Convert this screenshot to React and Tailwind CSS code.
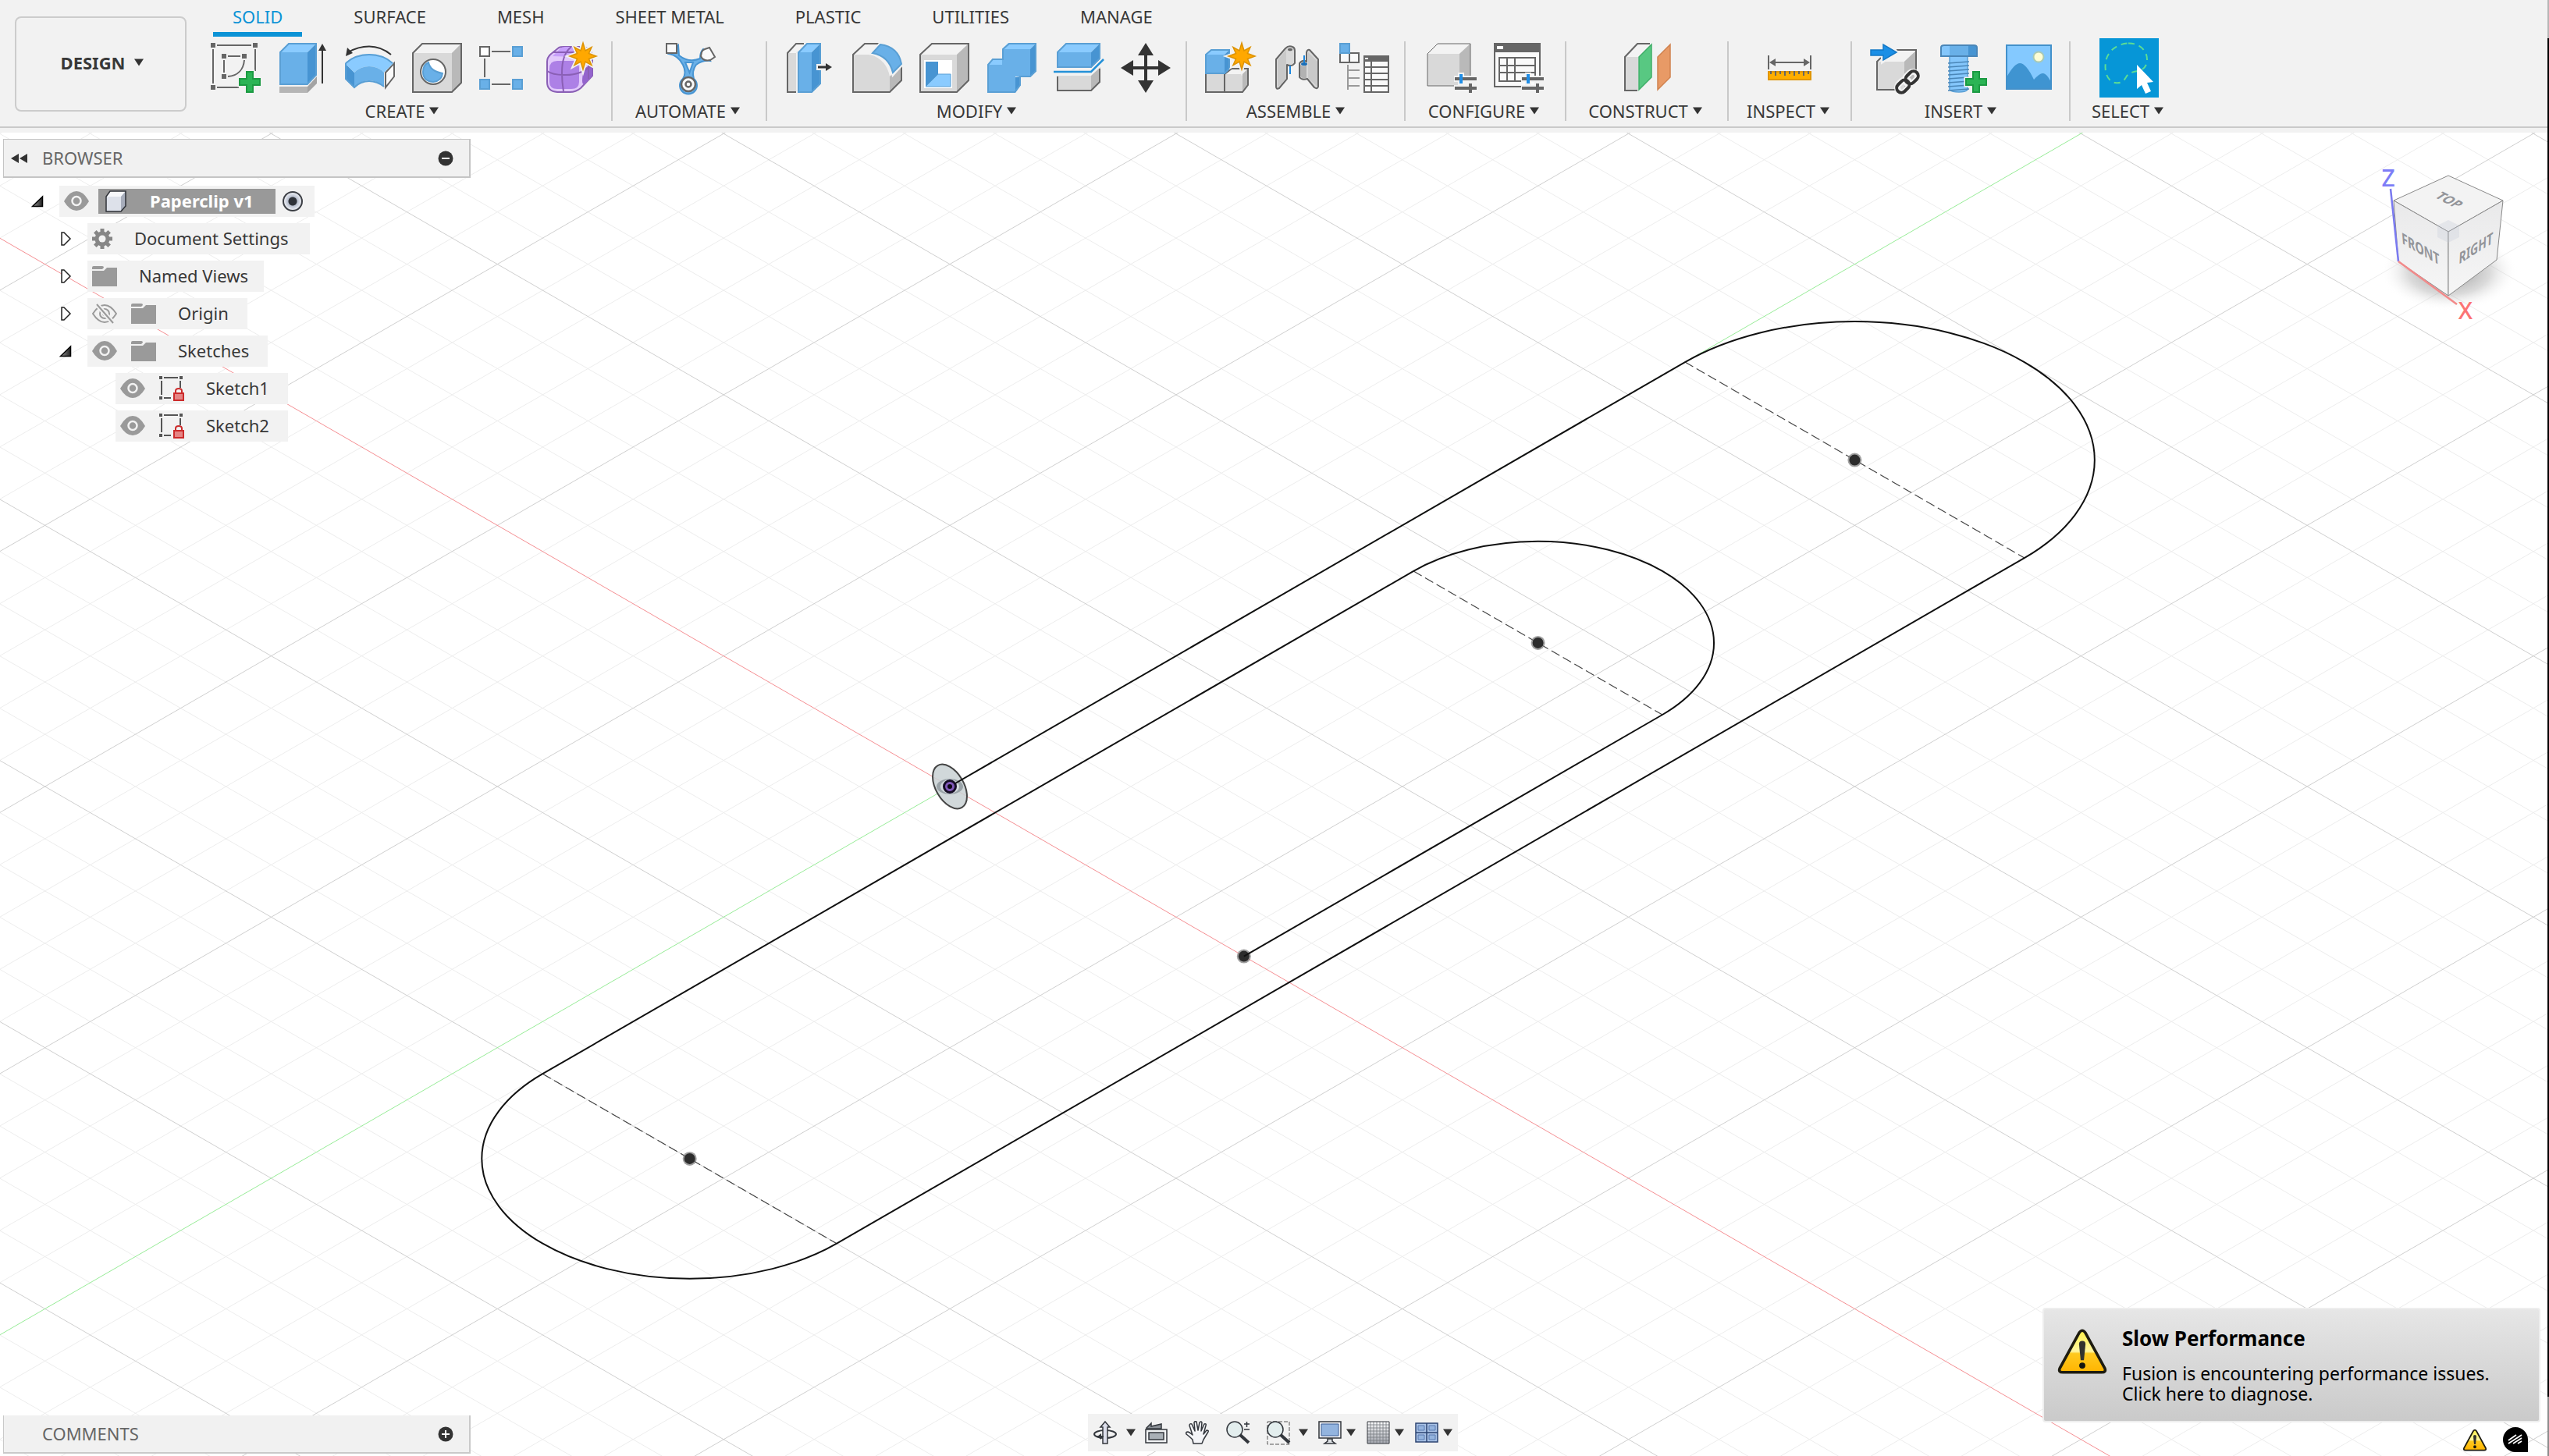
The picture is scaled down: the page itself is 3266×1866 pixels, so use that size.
import React from "react";

/* ---------- shared bits ---------- */

const BLUE = "#69b0e8";
const BLUE_TOP = "#8acbff";
const BLUE_SIDE = "#4794d2";
const BLUE_EDGE = "#5a9fd4";
const GRAY = "#d9d9d9";
const GRAY_TOP = "#f3f3f3";
const GRAY_SIDE = "#b9b9b9";
const EDGE = "#666666";

function Caret() {
  return (
    <svg viewBox="0 0 12 10" className="h-[10px] w-3 shrink-0" aria-hidden="true">
      <path d="M0 0.5H12L6 9.5Z" fill="#333" />
    </svg>
  );
}

function Icon({ children }) {
  return (
    <svg viewBox="0 0 64 64" className="size-16 overflow-visible" aria-hidden="true">
      {children}
    </svg>
  );
}

const STAR =
  "M0 -17 L3 -7 L11 -11.5 L7.5 -3.5 L17 0 L7.5 3.5 L11 11.5 L3 7 L0 17 L-3 7 L-11 11.5 L-7.5 3.5 L-17 0 L-7.5 -3.5 L-11 -11.5 L-3 -7 Z";

function Star({ x, y }) {
  return (
    <g transform={`translate(${x} ${y})`}>
      <path d={STAR} fill="#f2f2f2" stroke="#f2f2f2" strokeWidth="5" />
      <path d={STAR} fill="#ffa800" stroke="#dd9200" strokeWidth="1.5" />
    </g>
  );
}

function Plus() {
  const d = "M46 37H54V46H63V54H54V63H46V54H37V46H46Z";
  return (
    <g>
      <path d={d} fill="none" stroke="#f2f2f2" strokeWidth="5" />
      <path d={d} fill="#2bb455" stroke="#1c9a42" strokeWidth="2" />
    </g>
  );
}

/* ---------- ribbon icons ---------- */

const SketchIcon = () => (
  <Icon>
    <g fill={EDGE}>
      <path d="M0 0h6v6h-6zM54 0h6v6h-6zM0 54h6v6h-6zM14 14h6v6h-6zM40 14h6v6h-6zM14 40h6v6h-6z" />
    </g>
    <path d="M8 3H52M3 8V52M57 8V36M8 57H36M22 17H38M17 22V38M43 22C42 34 35 42 22 43" fill="none" stroke={EDGE} strokeWidth="2" />
    <Plus />
  </Icon>
);

const ExtrudeIcon = () => (
  <Icon>
    <path d="M2 56H38V64H2Z" fill="#b5b5b5" />
    <path d="M38 56L50 43V52L38 64Z" fill="#a3a3a3" />
    <path d="M2 12L14 0H50L38 12Z" fill={BLUE_TOP} />
    <path d="M38 12L50 0V41L38 54Z" fill={BLUE_SIDE} />
    <path d="M2 12H38V54H2Z" fill={BLUE} />
    <path d="M3 12L14 1H49V41L37.5 53H3Z" fill="none" stroke={BLUE_EDGE} strokeWidth="2" />
    <path d="M57 52V8" stroke="#333" strokeWidth="2" />
    <path d="M52 10L57 1L62 10Z" fill="#333" />
  </Icon>
);

const RevolveIcon = () => (
  <Icon>
    <path d="M52 38L63 26V43L52 57Z" fill="#fafafa" stroke={EDGE} strokeWidth="2" />
    <path d="M0 26L12 38V58L0 46Z" fill={BLUE_SIDE} />
    <path d="M0 26Q12 14 31 14Q50 14 62 26L50 38Q42 30 31 30Q20 30 12 38Z" fill={BLUE_TOP} />
    <path d="M12 38Q20 30 31 30Q42 30 50 38V56Q40 48 31 48Q20 48 12 58Z" fill={BLUE} />
    <path d="M1 26Q13 15 31 15Q49 15 61 26M1 26V46L12 57Q20 49 31 49Q41 49 50 56" fill="none" stroke={BLUE_EDGE} strokeWidth="2" />
    <path d="M4 12Q17 4.5 31 4.5Q46 4.5 59 15" fill="none" stroke="#333" strokeWidth="2" />
    <path d="M1 17L3 6L10 13Z" fill="#333" />
  </Icon>
);

const HoleIcon = () => (
  <Icon>
    <path d="M1 13L13 1H63V51L51 63H1Z" fill={GRAY} />
    <path d="M1 13L13 1H63L51 13Z" fill={GRAY_TOP} />
    <path d="M51 13L63 1V51L51 63Z" fill={GRAY_SIDE} />
    <path d="M1 13L13 1H63V51L51 63H1Z" fill="none" stroke={EDGE} strokeWidth="2" />
    <circle cx="27" cy="37" r="16" fill="#fff" stroke={EDGE} strokeWidth="2" />
    <path d="M21 25Q23 36 39 39Q38 49 27 50Q14 49 14 37Q14 28 21 25Z" fill={BLUE} stroke={BLUE_EDGE} strokeWidth="2" />
  </Icon>
);

const PatternIcon = () => (
  <Icon>
    <path d="M1 5h12v12h-12z" fill="#fff" stroke={EDGE} strokeWidth="2" />
    <path d="M43 5h12v12h-12zM1 47h12v12h-12zM43 47h12v12h-12z" fill={BLUE} stroke={BLUE_EDGE} strokeWidth="2" />
    <path d="M16 11H40M7 20V44M16 53H40" stroke={EDGE} strokeWidth="2" />
  </Icon>
);

const FormIcon = () => (
  <Icon>
    <path d="M1 24Q1 19 5 15L16 6Q18 5 22 5H48Q59 8 59 18V42L44 58Q38 63 30 63H14Q1 62 1 50Z" fill="#e2c9fb" stroke="#8a5fb5" strokeWidth="2" />
    <path d="M8 17L18 7Q20 5 24 5H42L36 18Z" fill="#c79ffb" />
    <path d="M47 34L59 26V42L50 52Q46 55 46 48Z" fill="#9464cd" />
    <path d="M4 33Q4 23 14 23H34Q42 23 42 32V50Q42 59 32 59H14Q4 59 4 50Z" fill="#ad80e6" />
    <path d="M1 36Q8 41 22 41Q44 42 59 28M22 62Q20 50 20 38Q20 14 32 5M8 12H36M54 24V46" fill="none" stroke="#8a5fb5" strokeWidth="2" />
    <Star x={47} y={17} />
  </Icon>
);

const AutomateIcon = () => (
  <Icon>
    <path d="M6 14Q18 16 24 28Q29 38 24 46A11 11 0 1 0 38 46Q35 36 41 28Q49 22 59 23L50 8Q46 12 46 20Q32 26 19 16L18 3Z" fill={BLUE} stroke={BLUE_SIDE} strokeWidth="2" />
    <path d="M27 25H37L32.5 38Z" fill="#f2f2f2" stroke={BLUE_SIDE} strokeWidth="2" />
    <path d="M3 1h13v12h-13z" fill="#fafafa" stroke={EDGE} strokeWidth="2" />
    <path d="M48 12Q49 9 52 8L58 6L65 18L59 22Q50 24 47 17Z" fill="#fafafa" stroke={EDGE} strokeWidth="2" />
    <circle cx="31" cy="53" r="9" fill="#fafafa" stroke={EDGE} strokeWidth="2.5" />
    <circle cx="31" cy="53" r="3.5" fill="#fafafa" stroke={EDGE} strokeWidth="2.5" />
  </Icon>
);

const PressPullIcon = () => (
  <Icon>
    <path d="M3 13L14 1H26L14 13V63H3Z" fill={GRAY} />
    <path d="M3 13L14 1H26L14 13Z" fill={GRAY_TOP} />
    <path d="M14 63H3V13L14 1H24" fill="none" stroke={EDGE} strokeWidth="2" />
    <path d="M16 12L28 0H46L34 12Z" fill={BLUE_TOP} />
    <path d="M34 12L46 0V52L34 64Z" fill={BLUE_SIDE} />
    <path d="M16 12H34V64H16Z" fill={BLUE} />
    <path d="M17 12.5L28 1H45V52L34 63H17Z" fill="none" stroke={BLUE_EDGE} strokeWidth="2" />
    <path d="M40 31H54" stroke="#f2f2f2" strokeWidth="8" />
    <path d="M42 31H54" stroke="#333" strokeWidth="3" />
    <path d="M52 26L60 31L52 36Z" fill="#333" />
  </Icon>
);

const FilletIcon = () => (
  <Icon>
    <path d="M1 15L16 1H36L24 15Q44 22 48 43L63 29V48L48 63H1Z" fill={GRAY} />
    <path d="M1 15L16 1H36L23 15Z" fill={GRAY_TOP} />
    <path d="M48 43L63 29V48L48 63Z" fill={GRAY_SIDE} />
    <path d="M34 1H16L1 15V63H48L63 48V30" fill="none" stroke={EDGE} strokeWidth="2" />
    <path d="M24 14L35 1Q60 4 64 28L52 41Q47 17 24 14Z" fill={BLUE} stroke="#f2f2f2" strokeWidth="3" />
    <path d="M26 13L36 2Q59 5 63 27L52 38Q47 17 26 13Z" fill={BLUE} stroke={BLUE_EDGE} strokeWidth="2" />
  </Icon>
);

const ShellIcon = () => (
  <Icon>
    <path d="M1 15L16 1H63V48L48 63H1Z" fill={GRAY} />
    <path d="M1 15L16 1H63L48 15Z" fill={GRAY_TOP} />
    <path d="M48 15L63 1V48L48 63Z" fill={GRAY_SIDE} />
    <path d="M1 15L16 1H63V48L48 63H1Z" fill="none" stroke={EDGE} strokeWidth="2" />
    <path d="M6 22H42V58H6Z" fill="#fff" />
    <path d="M8 24H24V40L8 56Z" fill={BLUE_SIDE} />
    <path d="M24 40H40V56H8Z" fill={BLUE_TOP} stroke={BLUE_EDGE} />
  </Icon>
);

const CombineIcon = () => (
  <Icon>
    <path d="M1 28L8 20H20V28Z" fill={BLUE_TOP} />
    <path d="M20 8L28 0H64L56 8Z" fill={BLUE_TOP} />
    <path d="M56 8L64 0V36L56 43Z" fill={BLUE_SIDE} />
    <path d="M37 44L44 43V54L37 64Z" fill={BLUE_SIDE} />
    <path d="M20 8H56V43H37V64H1V28H20Z" fill={BLUE} />
    <path d="M2 28L8 21H21V8L29 1H63V36L56 43H43V54L36 63H2Z" fill="none" stroke={BLUE_EDGE} strokeWidth="2" />
  </Icon>
);

const SplitIcon = () => (
  <Icon>
    <path d="M4 42H48V61H4Z" fill={GRAY} />
    <path d="M48 42L60 31V50L48 61Z" fill={GRAY_SIDE} />
    <path d="M5 43V61H48L59 50V33" fill="none" stroke={EDGE} strokeWidth="2" />
    <path d="M4 12L16 0H60L48 12Z" fill={BLUE_TOP} />
    <path d="M48 12L60 0V20L48 32Z" fill={BLUE_SIDE} />
    <path d="M4 12H48V32H4Z" fill={BLUE} />
    <path d="M5 12L16 1H59V20L48 31H5Z" fill="none" stroke={BLUE_EDGE} strokeWidth="2" />
    <path d="M0 37H48L64 21" fill="none" stroke="#f2f2f2" strokeWidth="6" />
    <path d="M0 37H48L64 21" fill="none" stroke="#2491d8" strokeWidth="2.5" />
  </Icon>
);

const MoveIcon = () => (
  <Icon>
    <path d="M32 12V52M12 32H52" stroke="#333" strokeWidth="4" />
    <path d="M32 0L42 16H22ZM32 64L42 48H22ZM0 32L16 22V42ZM64 32L48 22V42Z" fill="#333" />
  </Icon>
);

const NewComponentIcon = () => (
  <Icon>
    <path d="M1 40H25L34 33H55V54L48 63H1Z" fill={GRAY} />
    <path d="M25 40L34 33H55L48 40Z" fill={GRAY_TOP} />
    <path d="M48 40L55 33V54L48 63Z" fill={GRAY_SIDE} />
    <path d="M1 40V63H48L55 54V33H34L25 40V63" fill="none" stroke={EDGE} strokeWidth="2" />
    <path d="M0 15L8 8H32L25 15Z" fill={BLUE_TOP} />
    <path d="M25 15L32 8V33L25 40Z" fill={BLUE_SIDE} />
    <path d="M0 15H25V40H0Z" fill={BLUE} />
    <path d="M1 15L8 9H31V33L25 39H1Z" fill="none" stroke={BLUE_EDGE} strokeWidth="2" />
    <Star x={47} y={17} />
  </Icon>
);

const JointIcon = () => (
  <Icon>
    <path d="M5 21L17 7Q21 3 26 5Q29 6 29 10V26Q25 31 19 28V46L9 58Q5 60 5 56Z" fill={GRAY} stroke={EDGE} strokeWidth="2" strokeLinejoin="round" />
    <path d="M7 22L18 9V46L7 57Z" fill="#c9c9c9" />
    <ellipse cx="23" cy="8.5" rx="3" ry="1.8" fill={EDGE} />
    <path d="M44 12Q45 8 48 9L59 21V56Q58 60 54 57L45 46Q38 48 35 44V26Q39 21 44 24Z" fill={GRAY} stroke={EDGE} strokeWidth="2" strokeLinejoin="round" />
    <path d="M46 12L58 24V56L46 45Z" fill="#c9c9c9" />
    <path d="M36 28Q40 31 44 28V45Q39 46 36 43Z" fill="#b2b2b2" />
    <path d="M23 29V40M41 16V27" stroke="#1b87e0" strokeWidth="2" />
    <ellipse cx="41" cy="27" rx="4" ry="2" fill="#1b6fb8" />
  </Icon>
);

const BomIcon = () => (
  <Icon>
    <path d="M1 13h12v12h-12zM13 13h12v12h-12z" fill="#fafafa" stroke={EDGE} strokeWidth="2" />
    <path d="M1 1h12v12h-12z" fill={BLUE} stroke={BLUE_EDGE} strokeWidth="2" />
    <path d="M11 28V60M11 35H26M11 45H26M11 55H26" fill="none" stroke="#999" strokeWidth="2" />
    <path d="M32 17H63V63H32Z" fill="#fafafa" stroke={EDGE} strokeWidth="2" />
    <path d="M31 16H64V24H31Z" fill={EDGE} />
    <path d="M33 19h4v2h-4z" fill="#fff" />
    <path d="M41 24V63M32 31H63M32 39H63M32 47H63M32 55H63" stroke={EDGE} strokeWidth="2" />
  </Icon>
);

function Sliders() {
  return (
    <g>
      <path d="M35 46H64M35 58H64" stroke="#f2f2f2" strokeWidth="8" />
      <path d="M44 38V54M56 50V64" stroke="#f2f2f2" strokeWidth="8" />
      <path d="M36 46H64M36 58H64" stroke={EDGE} strokeWidth="4" />
      <path d="M44 40V52" stroke="#1f8de6" strokeWidth="4" />
      <path d="M56 52V64" stroke={EDGE} strokeWidth="4" />
    </g>
  );
}

const ConfigureIcon = () => (
  <Icon>
    <path d="M1 14L14 1H56V42L42 55H1Z" fill={GRAY} />
    <path d="M1 14L14 1H56L42 14Z" fill={GRAY_TOP} />
    <path d="M42 14L56 1V42L42 55Z" fill={GRAY_SIDE} />
    <path d="M1 14L14 1H56V42L42 55H1Z" fill="none" stroke={EDGE} />
    <Sliders />
  </Icon>
);

const ConfigTableIcon = () => (
  <Icon>
    <path d="M1 1H59V56H1Z" fill="#fafafa" stroke={EDGE} strokeWidth="2" />
    <path d="M0 0H60V12H0Z" fill={EDGE} />
    <path d="M4 4h8v4h-8z" fill="#fff" />
    <path d="M7 19H53V49H7ZM7 29H53M7 38H53M17 19V49M27 19V49" fill="none" stroke={EDGE} strokeWidth="2" />
    <Sliders />
  </Icon>
);

const PlaneIcon = () => (
  <Icon>
    <path d="M4 18L22 1H38L21 18V61H4Z" fill={GRAY} />
    <path d="M4 18L22 1H38L21 18Z" fill={GRAY_TOP} />
    <path d="M20 61H4V18L20 1H36" fill="none" stroke={EDGE} strokeWidth="2" />
    <path d="M22 18L38 2V44L22 60Z" fill="#58c882" stroke="#3fae68" strokeWidth="1.5" />
    <path d="M46 18L62 2V44L46 60Z" fill="#e89a66" stroke="#d08350" strokeWidth="1.5" />
  </Icon>
);

const MeasureIcon = () => (
  <Icon>
    <path d="M5 16V34M59 16V34M8 25H56" stroke={EDGE} strokeWidth="2" />
    <path d="M6 25L14 20V30ZM58 25L50 20V30Z" fill={EDGE} />
    <path d="M5 37H59V47H5Z" fill="#ffae00" stroke="#e09600" strokeWidth="2" />
    <path d="M8 36V40M14 36V42M20 36V40M26 36V42M32 36V40M38 36V42M44 36V40M50 36V42M56 36V40" stroke={EDGE} strokeWidth="2" />
  </Icon>
);

const InsertDeriveIcon = () => (
  <Icon>
    <path d="M9 24L24 9H60V44L44 60H9Z" fill={GRAY} />
    <path d="M9 24L24 9H60L44 24Z" fill={GRAY_TOP} />
    <path d="M44 24L60 9V44L44 60Z" fill={GRAY_SIDE} />
    <path d="M34 9H59V44L43 60H9V24L14 19" fill="none" stroke={EDGE} strokeWidth="2" />
    <path d="M0 8H16V0L35 12L16 24V16H0Z" fill="#1b8fe6" stroke="#f2f2f2" strokeWidth="4" />
    <path d="M1 9H17V2L34 12L17 22V16H1Z" fill="#1b8fe6" stroke="#1579c6" strokeWidth="1.5" />
    <g transform="translate(48 50) rotate(-45)" fill="none">
      <path d="M-16 0a6 6 0 0 1 6-6h6a6 6 0 0 1 0 12h-6a6 6 0 0 1-6-6ZM-2 0a6 6 0 0 1 6-6h6a6 6 0 0 1 0 12h-6a6 6 0 0 1-6-6Z" stroke="#f2f2f2" strokeWidth="8" />
      <path d="M-17 0a6 6 0 0 1 6-6h6a6 6 0 0 1 0 12h-6a6 6 0 0 1-6-6ZM-1 0a6 6 0 0 1 6-6h6a6 6 0 0 1 0 12h-6a6 6 0 0 1-6-6Z" stroke="#333" strokeWidth="4" />
    </g>
  </Icon>
);

const FastenerIcon = () => (
  <Icon>
    <path d="M16 17H39V60Q36 63 28 63Q19 63 16 60Z" fill="#84c6fb" stroke={BLUE_EDGE} strokeWidth="1.5" />
    <path d="M14 26L41 24M14 31L41 29M14 36L41 34M14 41L41 39M14 46L41 44M14 51L41 49M14 56L41 54M14 61L41 59" stroke="#4a86b8" strokeWidth="1.5" />
    <path d="M5 6Q5 3 9 3H47Q51 3 51 6V17H5Z" fill="#84c6fb" />
    <path d="M16 3H40V17H16Z" fill={BLUE} />
    <path d="M40 3H47Q51 3 51 6V17H40Z" fill={BLUE_SIDE} />
    <path d="M5 6Q5 3 9 3H47Q51 3 51 6V17H5Z" fill="none" stroke="#4a86b8" strokeWidth="2" />
    <Plus />
  </Icon>
);

const CanvasIcon = () => (
  <Icon>
    <path d="M3 3H60V59H3Z" fill="#84c9ff" />
    <path d="M3 44Q13 26 20 26Q28 26 38 47Q46 38 50 39Q54 39 60 50V59H3Z" fill="#3f94d1" />
    <circle cx="44" cy="18" r="6.5" fill="#fdfdd4" stroke="#a9c9b4" strokeWidth="2" />
    <path d="M3 3H60V59H3Z" fill="none" stroke="#4391cb" strokeWidth="2" />
  </Icon>
);

const SelectIcon = () => (
  <svg viewBox="0 0 76 76" className="-my-[6px] size-[76px]" aria-hidden="true">
    <rect width="76" height="76" fill="#0696d7" />
    <path d="M37 6.5C50 6 61 15 61 27Q61 39 50 42Q38 43 34 50Q29 59 20 57C10 55 6 43 8 30C10 18 21 7 37 6.5Z" fill="none" stroke="#5cdd94" strokeWidth="2" strokeDasharray="8 6" />
    <path d="M48 34L69 56L61 57L66 68L59 71L54 60L48 65Z" fill="#fff" />
  </svg>
);

/* ---------- ribbon ---------- */

const TABS = ["SOLID", "SURFACE", "MESH", "SHEET METAL", "PLASTIC", "UTILITIES", "MANAGE"];

const GROUPS = [
  {
    label: "CREATE",
    box: "pr-[19px] border-r-2",
    icons: [["Create Sketch", SketchIcon], ["Extrude", ExtrudeIcon], ["Revolve", RevolveIcon], ["Hole", HoleIcon], ["Rectangular Pattern", PatternIcon], ["Create Form", FormIcon]],
  },
  { label: "AUTOMATE", box: "w-[198px] border-r-2", icons: [["Automated Modeling", AutomateIcon]] },
  {
    label: "MODIFY",
    box: "pl-[23px] pr-[19px] border-r-2",
    icons: [["Press Pull", PressPullIcon], ["Fillet", FilletIcon], ["Shell", ShellIcon], ["Combine", CombineIcon], ["Split Body", SplitIcon], ["Move", MoveIcon]],
  },
  { label: "ASSEMBLE", box: "pl-[23px] pr-[19px] border-r-2", icons: [["New Component", NewComponentIcon], ["Joint", JointIcon], ["Bill of Materials", BomIcon]] },
  { label: "CONFIGURE", box: "w-[206px] border-r-2", icons: [["Configure", ConfigureIcon], ["Configuration Table", ConfigTableIcon]] },
  { label: "CONSTRUCT", box: "w-[208px] border-r-2", icons: [["Offset Plane", PlaneIcon]] },
  { label: "INSPECT", box: "w-[158px] border-r-2", icons: [["Measure", MeasureIcon]] },
  { label: "INSERT", box: "pl-[23px] pr-[19px] border-r-2", icons: [["Insert Derive", InsertDeriveIcon], ["Insert Fastener", FastenerIcon], ["Canvas", CanvasIcon]] },
  { label: "SELECT", box: "w-[150px]", icons: [["Select", SelectIcon]] },
];

function Ribbon() {
  return (
    <header className="flex shrink-0 flex-col bg-[#f2f2f2] pb-[6px]">
      <div className="flex h-[164px] items-start border-b-2 border-[#cacaca]">
        <button className="mt-[21px] ml-[19px] flex h-[122px] w-[220px] shrink-0 items-center justify-center gap-3 rounded-lg border-2 border-[#cccccc] pb-1 pl-1 font-bold">
          DESIGN <Caret />
        </button>
        <div className="ml-[31px] flex flex-col">
          <nav className="ml-[3px] flex h-[47px] gap-[41px]" role="tablist">
            {TABS.map((t, i) => (
              <button
                key={t}
                role="tab"
                aria-selected={i === 0}
                className={
                  i === 0
                    ? "border-b-[6px] border-[#0c93d6] px-[25px] text-[#0c93d6]"
                    : "border-b-[6px] border-transparent px-[25px]"
                }
              >
                {t}
              </button>
            ))}
          </nav>
          <div className="mt-[6px] flex h-[102px]">
            {GROUPS.map((g) => (
              <section key={g.label} className={`flex shrink-0 flex-col items-center border-[#c9c9c9] pt-[2px] ${g.box}`}>
                <div className="flex h-16 gap-[22px]">
                  {g.icons.map(([name, I]) => (
                    <button key={name} aria-label={name} className="h-16">
                      <I />
                    </button>
                  ))}
                </div>
                <button className="mt-[11px] flex items-center gap-[6px] pr-1 leading-6">
                  {g.label} <Caret />
                </button>
              </section>
            ))}
          </div>
        </div>
      </div>
    </header>
  );
}

/* ---------- sketch canvas ---------- */

const OX = 1217;
const OY = 1008;
const DX = 57.97;
const DY = 33.47;
const pt = (u, v) => `${(OX + (u + v) * DX).toFixed(1)} ${(OY + (u - v) * DY).toFixed(1)}`;
const seg = (u1, v1, u2, v2) => `M${pt(u1, v1)}L${pt(u2, v2)}`;

const range = Array.from({ length: 71 }, (_, i) => i - 30);
const gridPath = (keep) =>
  range.filter(keep).map((k) => seg(k, -32, k, 42) + seg(-32, k, 42, k)).join("");
const MINOR = gridPath((k) => k % 5 !== 0);
const MAJOR = gridPath((k) => k % 5 === 0 && k !== 0);

/* Radii sit just under the half chord, so the renderer scales each arc up to an exact half ellipse. */
const arc = (r, u, v) => {
  const rx = (r * DX * Math.SQRT2 * 0.99).toFixed(2);
  const ry = (r * DY * Math.SQRT2 * 0.99).toFixed(2);
  return `A${rx} ${ry} 0 0 1 ${pt(u, v)}`;
};
const CLIP =
  `M${pt(0, 0)}L${pt(0, 16.25)}${arc(3.75, 7.5, 16.25)}L${pt(7.5, -10)}${arc(3.25, 1, -10)}` +
  `L${pt(1, 9.25)}${arc(2.75, 6.5, 9.25)}L${pt(6.5, 0)}`;
const DIAMETERS = seg(0, 16.25, 7.5, 16.25) + seg(1, -10, 7.5, -10) + seg(1, 9.25, 6.5, 9.25);
const DOTS = [[3.75, 16.25], [4.25, -10], [3.75, 9.25], [6.5, 0]];

function Canvas() {
  return (
    <svg className="absolute inset-0 size-full" aria-hidden="true">
      <g transform="translate(0 -170)" fill="none">
        <path d={MINOR} stroke="#ededed" />
        <path d={MAJOR} stroke="#cfcfcf" />
        <path d={seg(-32, 0, 42, 0)} stroke="#f58f93" />
        <path d={seg(0, -32, 0, 42)} stroke="#98ec98" />
        <g transform={`translate(${OX} ${OY})`}>
          <ellipse rx="31" ry="18" transform="rotate(60)" fill="#c9d1d4" fillOpacity="0.85" stroke="#444" strokeWidth="2" />
          <ellipse rx="17" ry="10" fill="#9aa3a8" />
          <ellipse rx="12" ry="9" fill="#d3dadd" />
        </g>
        <path d={DIAMETERS} stroke="#444" strokeWidth="1.2" strokeDasharray="12 5" />
        {DOTS.map(([u, v]) => {
          const [cx, cy] = pt(u, v).split(" ");
          return (
            <g key={`${u},${v}`}>
              <circle cx={cx} cy={cy} r="9" fill="#777" fillOpacity="0.7" />
              <circle cx={cx} cy={cy} r="7" fill="#2c2c2c" />
            </g>
          );
        })}
        <path d={CLIP} stroke="#111" strokeWidth="2" />
        <circle cx={OX} cy={OY} r="7.5" fill="#8059b8" stroke="#150d25" strokeWidth="3" />
        <circle cx={OX} cy={OY} r="3" fill="#0d0714" />
      </g>
    </svg>
  );
}

/* ---------- browser tree ---------- */

const EYE = "M0 16Q7 3 16 3Q25 3 32 16Q25 28 16 28Q7 28 0 16Z";

function Eye() {
  return (
    <svg viewBox="0 0 32 32" className="size-8" aria-hidden="true">
      <path d={EYE} fill="#9a9a9a" />
      <circle cx="16" cy="15.5" r="5.5" fill="none" stroke="#f2f2f2" strokeWidth="2.5" />
    </svg>
  );
}

function EyeOff() {
  return (
    <svg viewBox="0 0 32 32" className="size-8" fill="none" stroke="#9a9a9a" strokeWidth="2" aria-hidden="true">
      <path d="M1 16Q8 5 16 5Q24 5 31 16Q24 27 16 27Q8 27 1 16Z" />
      <circle cx="16" cy="16" r="6" />
      <circle cx="16" cy="16" r="2" />
      <path d="M6 4L27 28" stroke="#f2f2f2" strokeWidth="6" />
      <path d="M6 4L27 28" />
    </svg>
  );
}

function Folder() {
  return (
    <svg viewBox="0 0 32 32" className="size-8" fill="#9a9a9a" aria-hidden="true">
      <path d="M0 5Q0 3 2 3H13Q15 3 15 5L13 7H0Z" />
      <path d="M0 9H15L19 5H32V29H0Z" />
    </svg>
  );
}

function Gear() {
  return (
    <svg viewBox="-13 -13 26 26" className="h-8 w-[26px]" aria-hidden="true">
      <g fill="#868686">
        {[0, 45, 90, 135].map((a) => (
          <rect key={a} x="-2.5" y="-13" width="5" height="26" transform={`rotate(${a})`} />
        ))}
        <circle r="9.5" />
      </g>
      <circle r="4.5" fill="#f2f2f2" />
    </svg>
  );
}

function LockedSketch() {
  return (
    <svg viewBox="0 0 32 32" className="size-8" aria-hidden="true">
      <path d="M0 0h4v4h-4zM26 0h4v4h-4zM0 26h4v4h-4z" fill="#555" />
      <path d="M6 2H24M3 6V24M27 6V15M6 28H15" stroke="#555" strokeWidth="2" />
      <path d="M21 21V19Q21 16 25 16Q29 16 29 19V21" fill="none" stroke="#cc2b2b" strokeWidth="2" />
      <path d="M19 22H31V31H19Z" fill="#e58484" stroke="#cc2b2b" strokeWidth="2" />
    </svg>
  );
}

function ComponentCube() {
  return (
    <svg viewBox="0 0 27 28" className="h-7 w-[27px]" aria-hidden="true">
      <path d="M1 8L6 1H26V20L20 27H1Z" fill="#dde1ea" />
      <path d="M1 8L6 1H26L20 8Z" fill="#f7f8fb" />
      <path d="M20 8L26 1V20L20 27Z" fill="#a7adbb" />
      <path d="M1 8L6 1H26V20L20 27H1Z" fill="none" stroke="#2f3238" strokeWidth="1.5" />
    </svg>
  );
}

function Expander({ open, label }) {
  return (
    <button aria-label={`Toggle ${label}`} aria-expanded={open} className="flex w-9 justify-center">
      <svg viewBox="0 0 16 20" className="h-5 w-4" aria-hidden="true">
        {open ? (
          <>
            <defs>
              <linearGradient id="exp" x1="0" x2="1">
                <stop offset="0" stopColor="#999" />
                <stop offset="1" stopColor="#222" />
              </linearGradient>
            </defs>
            <path d="M1.5 16.5H14.5V4Z" fill="url(#exp)" stroke="#000" strokeWidth="1.5" />
          </>
        ) : (
          <path d="M3 2V18H6L14 10L6 2Z" fill="#fff" stroke="#222" strokeWidth="1.5" />
        )}
      </svg>
    </button>
  );
}

function Row({ label, open, children }) {
  return (
    <div className="flex h-10 items-center">
      {open === undefined ? <span className="w-9" /> : <Expander open={open} label={label} />}
      <div className="ml-[10px] flex h-10 items-center bg-[#f2f2f2] pl-[6px]">{children}</div>
    </div>
  );
}

function Browser() {
  return (
    <aside className="flex flex-col">
      <div className="ml-1 flex h-[50px] w-[599px] items-center border-t border-r-2 border-b-2 border-l border-[#c4c4c4] bg-[#f1f1f1] pr-5 pl-[9px] text-[#666]">
        <button aria-label="Collapse browser">
          <svg viewBox="0 0 22 14" className="h-[14px] w-[22px]" aria-hidden="true">
            <path d="M0 7L10 1V13ZM11 7L21 1V13Z" fill="#333" />
          </svg>
        </button>
        <h2 className="ml-[18px] flex-1 pb-[2px]">BROWSER</h2>
        <button aria-label="Hide browser">
          <svg viewBox="0 0 20 20" className="size-5" aria-hidden="true">
            <circle cx="10" cy="10" r="9.5" fill="#333" />
            <path d="M5 10H15" stroke="#fff" strokeWidth="2" />
          </svg>
        </button>
      </div>
      <ul className="mt-[10px] ml-[30px] flex flex-col gap-2 whitespace-pre">
        <li className="flex flex-col gap-2">
          <Row label="Paperclip v1" open>
            <Eye />
            <div className="ml-3 flex h-8 items-center gap-[30px] bg-[#999] pr-7 pl-[9px] font-bold text-white">
              <ComponentCube />
              <span className="pb-[2px]">Paperclip v1</span>
            </div>
            <input
              type="radio"
              aria-label="Activate Paperclip v1"
              defaultChecked
              className="mr-[15px] ml-[9px] size-[26px] appearance-none rounded-full border-2 border-[#3c3f45] bg-[radial-gradient(circle,#2e3238_0_5px,#b9c0cf_6px,#f4f6fa_12px)]"
            />
          </Row>
          <ul className="ml-9 flex flex-col gap-2">
            <li>
              <Row label="Document Settings" open={false}>
                <Gear />
                <span className="pr-7 pb-[2px] pl-7">Document Settings</span>
              </Row>
            </li>
            <li>
              <Row label="Named Views" open={false}>
                <Folder />
                <span className="pr-5 pb-[2px] pl-7">Named Views</span>
              </Row>
            </li>
            <li>
              <Row label="Origin" open={false}>
                <EyeOff />
                <span className="w-[18px]" />
                <Folder />
                <span className="pr-6 pb-[2px] pl-7">Origin</span>
              </Row>
            </li>
            <li className="flex flex-col gap-2">
              <Row label="Sketches" open>
                <Eye />
                <span className="w-[18px]" />
                <Folder />
                <span className="pr-6 pb-[2px] pl-7">Sketches</span>
              </Row>
              <ul className="ml-9 flex flex-col gap-2">
                {["Sketch1", "Sketch2"].map((s) => (
                  <li key={s}>
                    <Row label={s}>
                      <Eye />
                      <span className="w-[18px]" />
                      <LockedSketch />
                      <span className="pr-6 pb-[2px] pl-7">{s}</span>
                    </Row>
                  </li>
                ))}
              </ul>
            </li>
          </ul>
        </li>
      </ul>
    </aside>
  );
}

function Comments() {
  return (
    <div className="mb-[3px] ml-1 flex h-[49px] w-[599px] items-center border-r-2 border-b-2 border-l border-[#c9c9c9] bg-[#f1f1f1] pr-5 pl-[49px] text-[#666]">
      <h2 className="flex-1 pb-[2px]">COMMENTS</h2>
      <button aria-label="Show comments">
        <svg viewBox="0 0 20 20" className="size-5" aria-hidden="true">
          <circle cx="10" cy="10" r="9.5" fill="#333" />
          <path d="M5 10H15M10 5V15" stroke="#fff" strokeWidth="2" />
        </svg>
      </button>
    </div>
  );
}

/* ---------- navigation bar ---------- */

function NavIcon({ name, className, children }) {
  return (
    <button aria-label={name} className={className}>
      <svg viewBox="0 0 30 30" className="size-[30px] overflow-visible" aria-hidden="true">
        {children}
      </svg>
    </button>
  );
}

function NavCaret({ className, label }) {
  return (
    <button aria-label={label} className={className}>
      <Caret />
    </button>
  );
}

const INK = "#33373d";

function NavBar() {
  return (
    <div role="toolbar" className="mr-[2px] mb-[6px] flex h-12 items-center self-end bg-[#f2f2f2] pr-[7px] pl-2">
      <NavIcon name="Orbit">
        <ellipse cx="14" cy="17" rx="14" ry="5" fill="none" stroke={INK} strokeWidth="2" />
        <path d="M14 1L20 8H17V29H11V8H8Z" fill="#dcdeea" stroke={INK} strokeWidth="1.5" />
        <path d="M4 20H12" stroke={INK} strokeWidth="2" />
        <path d="M4 20L9 16V24Z" fill={INK} />
      </NavIcon>
      <NavCaret className="ml-[11px]" label="Orbit options" />
      <NavIcon name="Look At" className="ml-3">
        <path d="M2 9L8 3V7L21 4V10H2Z" fill="#8b9096" stroke={INK} strokeWidth="1.5" />
        <path d="M1 11H28V28H1Z" fill="#f1f3f4" stroke={INK} strokeWidth="1.5" />
        <path d="M5 15H24V24H5Z" fill="#a9b0b6" stroke={INK} strokeWidth="1.5" />
      </NavIcon>
      <NavIcon name="Pan" className="ml-[22px]">
        <path d="M10 29L9 24Q5 20 1 17Q0 14 3 14Q6 15 9 18L5 6Q5 3 8 4L12 13L11 2Q12 0 14 1L16 12L18 2Q20 0 21 2L20 13L24 4Q27 3 26 6L23 17L27 12Q30 12 29 14L23 24L21 29Z" fill="#f4f5f8" stroke={INK} strokeWidth="1.5" strokeLinejoin="round" />
      </NavIcon>
      <NavIcon name="Zoom" className="ml-[22px]">
        <path d="M18 18L29 28" stroke={INK} strokeWidth="4" />
        <circle cx="11" cy="11" r="10" fill="#e3eeee" stroke={INK} strokeWidth="1.5" />
        <path d="M23 4H30M26.5 1V8M23 11H30" stroke={INK} strokeWidth="1.5" />
      </NavIcon>
      <NavIcon name="Fit" className="ml-[22px]">
        <path d="M1 1H29V30H1Z" fill="none" stroke="#555" strokeDasharray="5 2" />
        <path d="M18 18L29 28" stroke={INK} strokeWidth="4" />
        <circle cx="11" cy="11" r="10" fill="#e3eeee" stroke={INK} strokeWidth="1.5" />
      </NavIcon>
      <NavCaret className="ml-[11px]" label="Fit options" />
      <NavIcon name="Display Settings" className="ml-[13px]">
        <path d="M1 1H29V22H1Z" fill="#eceef2" stroke={INK} strokeWidth="1.5" />
        <path d="M4 4H26V19H4Z" fill="#93b4df" stroke="#3c5f96" />
        <path d="M12 23H18V26L22 29H8L12 26Z" fill="#dfe2e6" stroke={INK} strokeWidth="1.5" />
      </NavIcon>
      <NavCaret className="ml-[6px]" label="Display options" />
      <NavIcon name="Grid and Snaps" className="ml-[14px]">
        <defs>
          <linearGradient id="mesh" x1="0" y1="0" x2="0" y2="1">
            <stop offset="0" stopColor="#fcfcfd" />
            <stop offset="1" stopColor="#a3a6ae" />
          </linearGradient>
        </defs>
        <path d="M1 1H29V29H1Z" fill="url(#mesh)" />
        <path d="M1 5H29M1 9H29M1 13H29M1 17H29M1 21H29M1 25H29M5 1V29M9 1V29M13 1V29M17 1V29M21 1V29M25 1V29" fill="none" stroke="#777b82" strokeWidth="0.8" />
        <path d="M1 1H29V29H1Z" fill="none" stroke={INK} />
      </NavIcon>
      <NavCaret className="ml-[6px]" label="Grid options" />
      <NavIcon name="Viewports" className="ml-[14px]">
        <path d="M1 3H29V27H1Z" fill="#a9c2e6" stroke="#2c4472" strokeWidth="1.5" />
        <path d="M15 3V27M1 15H29" stroke="#2c4472" strokeWidth="1.5" />
        <path d="M4 6H12V12H4ZM18 6H26V12H18ZM4 18H12V24H4ZM18 18H26V24H18Z" fill="#94b3de" stroke="#5a7bb0" />
      </NavIcon>
      <NavCaret className="ml-[6px]" label="Viewport options" />
    </div>
  );
}

/* ---------- view cube ---------- */

function ViewCube() {
  return (
    <svg viewBox="3040 200 200 240" className="mt-[30px] mr-6 h-[240px] w-[200px] overflow-visible" role="img" aria-label="View cube">
      <defs>
        <radialGradient id="shade">
          <stop offset="0" stopColor="#777" stopOpacity="0.8" />
          <stop offset="0.6" stopColor="#999" stopOpacity="0.35" />
          <stop offset="1" stopColor="#fff" stopOpacity="0" />
        </radialGradient>
        <linearGradient id="face" x1="0" y1="0" x2="0" y2="1">
          <stop offset="0" stopColor="#e9e9ea" />
          <stop offset="1" stopColor="#f6f6f6" />
        </linearGradient>
      </defs>
      <ellipse cx="3138" cy="348" rx="88" ry="50" fill="url(#shade)" />
      <g stroke="#888" strokeWidth="1" strokeLinejoin="round">
        <path d="M3137 225L3207 257L3137 297L3067 257Z" fill="#f3f3f3" />
        <path d="M3067 257L3137 297V379L3073 335Z" fill="url(#face)" />
        <path d="M3137 297L3207 257L3199 333L3137 379Z" fill="url(#face)" />
      </g>
      <path d="M3137 282L3151 289V304L3137 311L3123 304V289Z" fill="#c3cad6" fillOpacity="0.3" />
      <path d="M3063 242L3073 335" stroke="#7a7af0" strokeWidth="2.5" />
      <path d="M3073 335L3148 390" stroke="#f28a8a" strokeWidth="2.5" />
      <g fontFamily="Noto Sans, sans-serif" textAnchor="middle">
        <g fontSize="30" fontWeight="500">
          <text x="3060" y="239" fill="#7d7df7">Z</text>
          <text x="3159" y="409" fill="#fb7474">X</text>
        </g>
        <g fontSize="20" fontWeight="700" fill="#93959a">
          <text transform="matrix(0.72 0.38 -0.75 0.5 3133 260)">TOP</text>
          <text transform="matrix(0.72 0.42 0.08 1 3102 326)">FRONT</text>
          <text transform="matrix(0.7 -0.44 -0.05 1 3172 325)">RIGHT</text>
        </g>
      </g>
    </svg>
  );
}

/* ---------- notification ---------- */

function Warning({ className }) {
  return (
    <svg viewBox="0 0 64 58" className={className} aria-hidden="true">
      <defs>
        <linearGradient id="warn" x1="0" y1="0" x2="0" y2="1">
          <stop offset="0" stopColor="#fff04a" />
          <stop offset="0.5" stopColor="#fff6a0" />
          <stop offset="0.55" stopColor="#ffc91f" />
          <stop offset="1" stopColor="#ffb400" />
        </linearGradient>
      </defs>
      <path d="M32 3Q34 3 36 6L60 50Q62 55 56 55H8Q2 55 4 50L28 6Q30 3 32 3Z" fill="url(#warn)" stroke="#1e1c10" strokeWidth="3.5" strokeLinejoin="round" />
      <path d="M28 20Q28 16 32 16Q36 16 36 20L34 40H30Z" fill="#33332e" />
      <circle cx="32" cy="46.5" r="3.8" fill="#151510" />
    </svg>
  );
}

function Notifications() {
  return (
    <div className="mb-[5px] flex flex-col items-end">
      <button className="mr-[9px] flex h-[147px] w-[638px] items-start rounded-sm border-2 border-[#eeeeee] bg-linear-to-b from-[#e6e6e6] to-[#cacaca] pt-[19px] pl-4 text-left text-black">
        <Warning className="mt-[5px] h-[60px] w-[66px]" />
        <span className="ml-[18px] flex flex-col">
          <span className="text-[26px] leading-9 font-bold">Slow Performance</span>
          <span className="mt-[14px] text-[23px] leading-[26px]">
            Fusion is encountering performance issues.
            <br />
            Click here to diagnose.
          </span>
        </span>
      </button>
      <div className="mt-[6px] mr-[25px] flex h-8 items-center gap-[20px]">
        <button aria-label="Performance warning">
          <Warning className="h-[29px] w-8" />
        </button>
        <button aria-label="Autodesk Assistant">
          <svg viewBox="0 0 32 32" className="size-8" aria-hidden="true">
            <path d="M16 0A16 16 0 0 1 32 16V32H16A16 16 0 0 1 16 0Z" fill="#000" />
            <path d="M7 17L17 10M7 21L24 10M13 21L24 14M19 21L24 18" stroke="#fff" strokeWidth="1.8" />
          </svg>
        </button>
      </div>
    </div>
  );
}

/* ---------- page ---------- */

export default function App() {
  return (
    <div className="flex h-screen overflow-hidden bg-white font-['Noto_Sans',sans-serif] text-[22px] leading-8 text-[#383838]">
      <div className="flex min-w-0 flex-1 flex-col">
        <Ribbon />
        <main className="relative flex-1 overflow-hidden">
          <Canvas />
          <div className="relative grid h-full grid-cols-[1fr_auto_1fr]">
            <div className="flex flex-col justify-between pt-2">
              <Browser />
              <Comments />
            </div>
            <NavBar />
            <div className="flex flex-col items-end justify-between">
              <ViewCube />
              <Notifications />
            </div>
          </div>
        </main>
      </div>
      <div className="flex w-[2px] flex-col bg-black">
        <div className="h-[49px] bg-[#b5b5b5]" />
        <div className="flex-1" />
        <div className="h-[76px] bg-[#8c8c8c]" />
      </div>
    </div>
  );
}
